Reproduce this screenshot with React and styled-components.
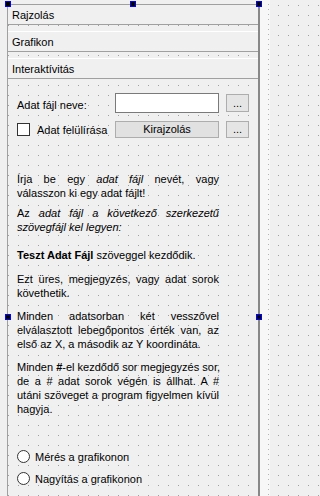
import styled, { createGlobalStyle } from 'styled-components';

const GlobalStyle = createGlobalStyle`
  html, body {
    margin: 0;
    padding: 0;
  }

  body {
    width: 270px;
    height: 496px;
    overflow: hidden;
    font-family: "Liberation Sans", Arial, sans-serif;
    font-size: 11px;
    color: #000;
    background-color: #a0a0a0;
    background-image:
      linear-gradient(90deg, #f0f0f0 9px, transparent 9px),
      linear-gradient(#f0f0f0 9px, transparent 9px);
    background-size: 10px 10px;
    background-position: 9px 6px;
  }
`;

const App = () => {
  return (
    <>
      <GlobalStyle />
      <Page>
        <Canvas>
          <ToolBox>
            <Handle $x={-3} $y={-4} />
            <Handle $x={122} $y={-4} />
            <Handle $x={248} $y={-4} />
            <Handle $x={-3} $y={309} />
            <Handle $x={248} $y={309} />

            <Tab $first>Rajzolás</Tab>
            <Tab>Grafikon</Tab>
            <Tab>Interaktívitás</Tab>

            <Panel>
              <FormGrid>
                <Label>Adat fájl neve:</Label>
                <TextInput />
                <DotsButton>...</DotsButton>

                <CheckRow>
                  <CheckBox />
                  <span>Adat felülírása</span>
                </CheckRow>
                <PushButton>Kirajzolás</PushButton>
                <DotsButton $tall>...</DotsButton>
              </FormGrid>

              <HelpText>
                <Paragraph>
                  <Line $justify>
                    Írja be egy <i>adat fájl</i> nevét, vagy
                  </Line>
                  <Line>válasszon ki egy adat fájlt!</Line>
                </Paragraph>
                <Paragraph $gap={6}>
                  <Line $justify>
                    Az <i>adat fájl a következő szerkezetű</i>
                  </Line>
                  <Line>
                    <i>szövegfájl kel legyen:</i>
                  </Line>
                </Paragraph>
                <Paragraph $gap={14}>
                  <Line>
                    <b>Teszt Adat Fájl</b> szöveggel kezdődik.
                  </Line>
                </Paragraph>
                <Paragraph $gap={10}>
                  <Line $justify>Ezt üres, megjegyzés, vagy adat sorok</Line>
                  <Line>követhetik.</Line>
                </Paragraph>
                <Paragraph $gap={9}>
                  <Line $justify>Minden adatsorban két vesszővel</Line>
                  <Line $justify>elválasztott lebegőpontos érték van, az</Line>
                  <Line>első az X, a második az Y koordináta.</Line>
                </Paragraph>
                <Paragraph $gap={9}>
                  <Line $justify>
                    Minden <b>#</b>-el kezdődő sor megjegyzés sor,
                  </Line>
                  <Line $justify>de a # adat sorok végén is állhat. A #</Line>
                  <Line $justify>utáni szöveget a program figyelmen kívül</Line>
                  <Line>hagyja.</Line>
                </Paragraph>
              </HelpText>

              <RadioList>
                <RadioRow>
                  <RadioCircle />
                  <span>Mérés a grafikonon</span>
                </RadioRow>
                <RadioRow>
                  <RadioCircle />
                  <span>Nagyítás a grafikonon</span>
                </RadioRow>
              </RadioList>
            </Panel>
          </ToolBox>
        </Canvas>
        <OuterStrip />
      </Page>
    </>
  );
};

export default App;

// ----------------------
// Styled Components
// ----------------------

const Page = styled.div`
  display: flex;
  width: 270px;
  height: 496px;
  overflow: hidden;
`;

const Canvas = styled.div`
  flex: none;
  width: 253px;
  padding: 4px 0 0 7px;
`;

const OuterStrip = styled.div`
  flex: 1;
  background-color: #f7f7f7;
  background-image:
    linear-gradient(#f7f7f7 4px, transparent 4px),
    linear-gradient(90deg, transparent 8px, #b4b4b4 8px, #b4b4b4 9px, transparent 9px);
  background-size: 100% 5px, 100% 100%;
`;

const ToolBox = styled.div`
  position: relative;
  width: 250px;
  height: 500px;
  border-top: 1px solid #a0a0a0;
  border-left: 1px solid #a0a0a0;
  border-right: 2px solid #888888;
`;

const Handle = styled.span`
  position: absolute;
  left: ${(p) => p.$x}px;
  top: ${(p) => p.$y}px;
  width: 4px;
  height: 4px;
  background: #000;
  border: 1px solid #0000ff;
  z-index: 2;
`;

const Tab = styled.div`
  height: 17px;
  line-height: 17px;
  padding: 2px 0 0 4px;
  margin-top: ${(p) => (p.$first ? 0 : 6)}px;
  background: #f0f0f0;
  border-top: ${(p) => (p.$first ? 'none' : '1px solid #ffffff')};
  border-bottom: 1px solid #a0a0a0;
  white-space: nowrap;
`;

const Panel = styled.div`
  padding: 14px 0 0 9px;
`;

const FormGrid = styled.div`
  display: grid;
  grid-template-columns: 91px 104px 23px;
  grid-template-rows: 20px 17px;
  column-gap: 7px;
  row-gap: 8px;
  align-items: center;
`;

const Label = styled.span`
  margin-top: 3px;
  white-space: nowrap;
`;

const TextInput = styled.div`
  box-sizing: border-box;
  height: 20px;
  background: #ffffff;
  border: 1px solid #7a7a7a;
`;

const PushButton = styled.div`
  box-sizing: border-box;
  height: 17px;
  line-height: 15px;
  text-align: center;
  background: #e1e1e1;
  border: 1px solid #adadad;
`;

const DotsButton = styled(PushButton)`
  height: ${(p) => (p.$tall ? 17 : 18)}px;
  line-height: ${(p) => (p.$tall ? 15 : 16)}px;
  background: #e5e5e5;
`;

const CheckRow = styled.label`
  display: flex;
  align-items: center;
  gap: 7px;
  white-space: nowrap;
`;

const CheckBox = styled.span`
  box-sizing: border-box;
  width: 13px;
  height: 13px;
  background: #ffffff;
  border: 1px solid #333333;
`;

const HelpText = styled.div`
  width: 202px;
  margin-top: 34px;
`;

const Paragraph = styled.div`
  margin-top: ${(p) => p.$gap || 0}px;
`;

const Line = styled.div`
  height: 14px;
  line-height: 14px;
  white-space: nowrap;
  text-align: ${(p) => (p.$justify ? 'justify' : 'left')};
  text-align-last: ${(p) => (p.$justify ? 'justify' : 'left')};
`;

const RadioList = styled.div`
  display: flex;
  flex-direction: column;
  gap: 9px;
  margin-top: 34px;
`;

const RadioRow = styled.label`
  display: flex;
  align-items: center;
  gap: 5px;
  height: 13px;
  white-space: nowrap;
`;

const RadioCircle = styled.span`
  box-sizing: border-box;
  width: 13px;
  height: 13px;
  border-radius: 50%;
  background: #ffffff;
  border: 1px solid #333333;
`;
